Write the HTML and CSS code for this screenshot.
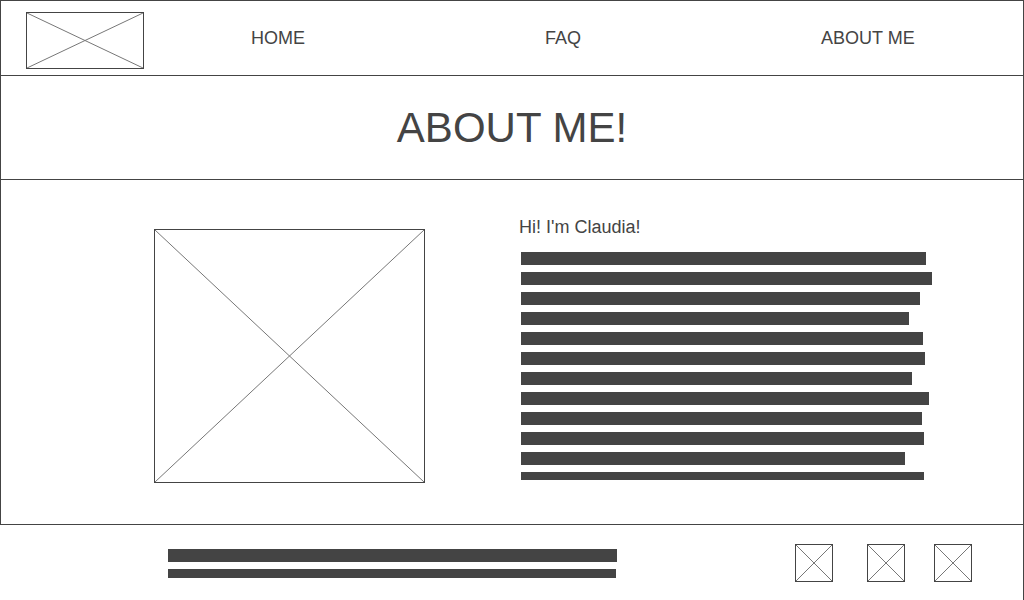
FILE: index.html
```html
<!DOCTYPE html>
<html lang="en">
<head>
    <meta charset="UTF-8">
    <meta name="viewport" content="width=device-width, initial-scale=1.0">
    <title>About Me</title>
    <link rel="stylesheet" href="styles.css">
</head>
<body>
    <div class="page">
        <header class="header">
            <div class="ph logo">
                <svg viewBox="0 0 100 100" preserveAspectRatio="none"><line x1="0" y1="0" x2="100" y2="100"/><line x1="100" y1="0" x2="0" y2="100"/></svg>
            </div>
            <nav class="nav">
                <a href="#">HOME</a>
                <a href="#">FAQ</a>
                <a href="#">ABOUT ME</a>
            </nav>
        </header>

        <section class="title">
            <h1>ABOUT ME!</h1>
        </section>

        <section class="content">
            <div class="ph photo">
                <svg viewBox="0 0 100 100" preserveAspectRatio="none"><line x1="0" y1="0" x2="100" y2="100"/><line x1="100" y1="0" x2="0" y2="100"/></svg>
            </div>
            <div class="bio">
                <h2>Hi! I'm Claudia!</h2>
                <div class="lines">
                    <span class="line" style="width: 405px"></span>
                    <span class="line" style="width: 411px"></span>
                    <span class="line" style="width: 399px"></span>
                    <span class="line" style="width: 388px"></span>
                    <span class="line" style="width: 402px"></span>
                    <span class="line" style="width: 404px"></span>
                    <span class="line" style="width: 391px"></span>
                    <span class="line" style="width: 408px"></span>
                    <span class="line" style="width: 401px"></span>
                    <span class="line" style="width: 403px"></span>
                    <span class="line" style="width: 384px"></span>
                    <span class="line cut" style="width: 403px"></span>
                </div>
            </div>
        </section>

        <footer class="footer">
            <div class="footer-text">
                <span class="line" style="width: 449px"></span>
                <span class="line thin" style="width: 448px"></span>
            </div>
            <div class="social">
                <div class="ph icon">
                    <svg viewBox="0 0 100 100" preserveAspectRatio="none"><line x1="0" y1="0" x2="100" y2="100"/><line x1="100" y1="0" x2="0" y2="100"/></svg>
                </div>
                <div class="ph icon">
                    <svg viewBox="0 0 100 100" preserveAspectRatio="none"><line x1="0" y1="0" x2="100" y2="100"/><line x1="100" y1="0" x2="0" y2="100"/></svg>
                </div>
                <div class="ph icon">
                    <svg viewBox="0 0 100 100" preserveAspectRatio="none"><line x1="0" y1="0" x2="100" y2="100"/><line x1="100" y1="0" x2="0" y2="100"/></svg>
                </div>
            </div>
        </footer>
    </div>
</body>
</html>
```

FILE: styles.css
```css
* {
    box-sizing: border-box;
}
body {
    font-family: "Liberation Sans", Arial, sans-serif;
    margin: 0;
    padding: 0;
    background-color: #fff;
    color: #444;
}
.page {
    width: 1024px;
    height: 600px;
    border-top: 1px solid #444;
    border-right: 1px solid #444;
    overflow: hidden;
}

/* wireframe image placeholder */
.ph {
    border: 1px solid #444;
    flex-shrink: 0;
}
.ph svg {
    display: block;
    width: 100%;
    height: 100%;
}
.ph line {
    stroke: #777;
    stroke-width: 1;
    vector-effect: non-scaling-stroke;
}

.header {
    height: 75px;
    display: flex;
    align-items: flex-start;
    border-left: 1px solid #444;
    border-bottom: 1px solid #444;
    padding: 11px 0 0 25px;
}
.logo {
    width: 118px;
    height: 57px;
}
.nav {
    display: flex;
    gap: 240px;
    margin-left: 107px;
    padding-top: 16px;
}
.nav a {
    color: #444;
    text-decoration: none;
    font-size: 18px;
    line-height: 20px;
}

.title {
    height: 104px;
    display: flex;
    justify-content: center;
    align-items: center;
    border-left: 1px solid #444;
    border-bottom: 1px solid #444;
}
.title h1 {
    margin: 0;
    font-size: 42px;
    font-weight: normal;
}

.content {
    height: 345px;
    display: flex;
    align-items: flex-start;
    border-left: 1px solid #444;
    border-bottom: 1px solid #444;
    padding-left: 153px;
}
.photo {
    width: 271px;
    height: 254px;
    margin-top: 49px;
}
.bio {
    margin-left: 94px;
    margin-top: 37px;
}
.bio h2 {
    margin: 0 0 14px;
    font-size: 18px;
    line-height: 21px;
    font-weight: normal;
}
.lines {
    display: flex;
    flex-direction: column;
    gap: 7px;
    padding-left: 2px;
}
.line {
    display: block;
    height: 13px;
    background-color: #444;
}
.line.cut {
    height: 8px;
}

.footer {
    height: 75px;
    display: flex;
    align-items: flex-start;
    padding-left: 168px;
}
.footer-text {
    display: flex;
    flex-direction: column;
    gap: 7px;
    margin-top: 24px;
}
.line.thin {
    height: 9px;
}
.social {
    display: flex;
    gap: 34px;
    margin-left: 178px;
    margin-top: 19px;
}
.icon {
    width: 38px;
    height: 38px;
}
.icon:last-child {
    margin-left: -5px;
}
```
